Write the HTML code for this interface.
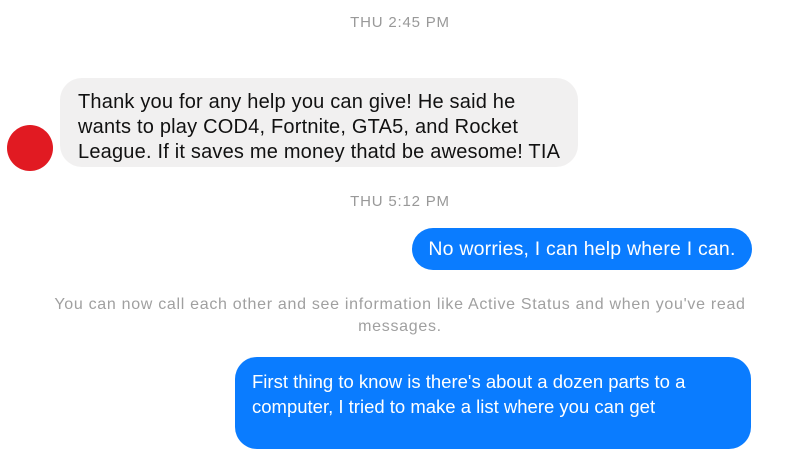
<!DOCTYPE html>
<html><head><style>
body{margin:0;width:800px;height:420px;overflow:hidden;background:#fff;font-family:"Liberation Sans",sans-serif;position:relative}
.ts{position:absolute;left:0;width:800px;text-align:center;color:#999;font-size:15px;letter-spacing:0.8px}
.b{position:absolute;line-height:25px;white-space:nowrap}
.g{background:#f1f0f0;color:#111;border-radius:22px;font-size:20px;letter-spacing:0.2px}
.bl{background:#0a7cff;color:#fff;border-radius:22px}
.sys{position:absolute;left:0;width:800px;text-align:center;color:#a0a0a0;font-size:16px;letter-spacing:0.7px;line-height:22px}
</style></head><body>
<div class="ts" style="top:14px">THU 2:45 PM</div>
<div style="position:absolute;left:7px;top:125px;width:46px;height:46px;border-radius:50%;background:#e11a22"></div>
<div class="b g" style="left:60px;top:78px;width:500px;height:65px;padding:12px 0 12px 18px">Thank you for any help you can give! He said he<br>wants to play COD4, Fortnite, GTA5, and Rocket<br>League. If it saves me money thatd be awesome! TIA</div>
<div class="ts" style="top:193px">THU 5:12 PM</div>
<div class="b bl" style="left:412px;top:228px;width:340px;height:42px;line-height:42px;text-align:center;font-size:19.5px;letter-spacing:0.2px">No worries, I can help where I can.</div>
<div class="sys" style="top:294px">You can now call each other and see information like Active Status and when you've read<br>messages.</div>
<div class="b bl" style="left:235px;top:357px;width:499px;height:80px;padding:12px 0 0 17px;font-size:18.5px">First thing to know is there's about a dozen parts to a<br>computer, I tried to make a list where you can get</div>
</body></html>
